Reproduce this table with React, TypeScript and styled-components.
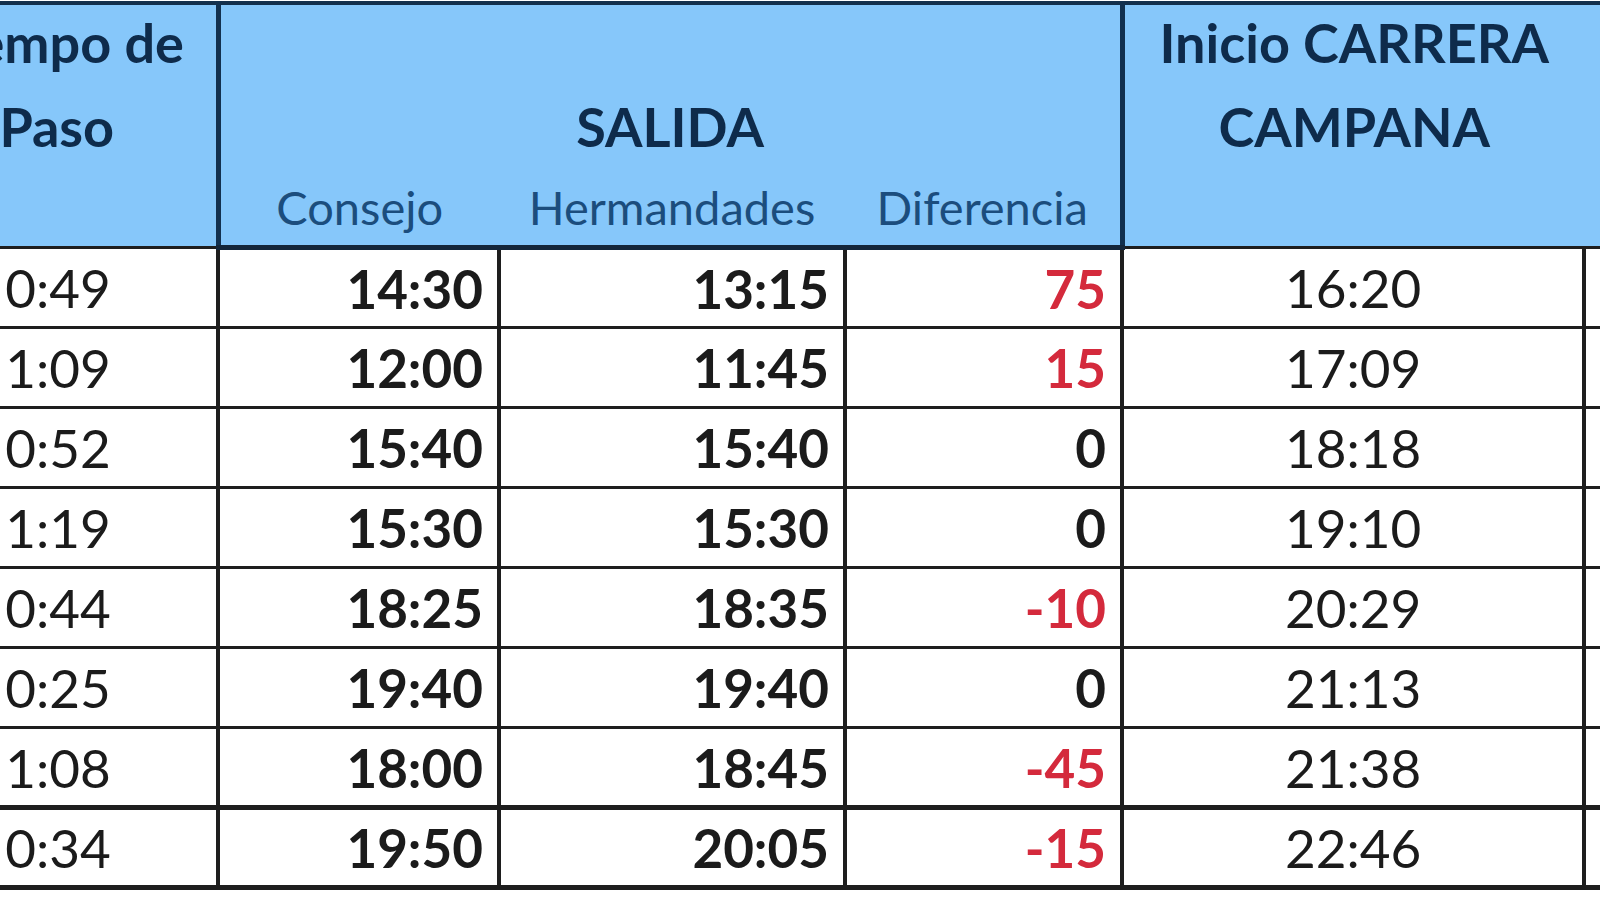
import React from "react";
import styled, { createGlobalStyle } from "styled-components";

interface Row {
  paso: string;
  consejo: string;
  hermandades: string;
  diferencia: number;
  carrera: string;
}

const rows: Row[] = [
  { paso: "0:49", consejo: "14:30", hermandades: "13:15", diferencia: 75, carrera: "16:20" },
  { paso: "1:09", consejo: "12:00", hermandades: "11:45", diferencia: 15, carrera: "17:09" },
  { paso: "0:52", consejo: "15:40", hermandades: "15:40", diferencia: 0, carrera: "18:18" },
  { paso: "1:19", consejo: "15:30", hermandades: "15:30", diferencia: 0, carrera: "19:10" },
  { paso: "0:44", consejo: "18:25", hermandades: "18:35", diferencia: -10, carrera: "20:29" },
  { paso: "0:25", consejo: "19:40", hermandades: "19:40", diferencia: 0, carrera: "21:13" },
  { paso: "1:08", consejo: "18:00", hermandades: "18:45", diferencia: -45, carrera: "21:38" },
  { paso: "0:34", consejo: "19:50", hermandades: "20:05", diferencia: -15, carrera: "22:46" },
];

const GlobalStyle = createGlobalStyle`
  html, body {
    margin: 0;
    padding: 0;
    background: #ffffff;
  }
`;

// the screenshot is a crop of a bigger sheet, so the table is cut on both sides
const Sheet = styled.div`
  width: 1600px;
  height: 900px;
  overflow: hidden;
  background: #ffffff;
  padding-top: 1px;
  box-sizing: border-box;
`;

const Table = styled.table`
  margin-left: -104px;
  border-collapse: collapse;
  table-layout: fixed;
  width: 1970px;
  font-family: Lato, "Open Sans", sans-serif;
`;

const HeadCell = styled.th<{ $align?: "top" | "bottom" }>`
  background: #86c7fa;
  color: #0e2b4b;
  font-size: 54px;
  font-weight: 700;
  line-height: 84px;
  height: 164px;
  padding: 0;
  text-align: center;
  vertical-align: ${({ $align }) => $align ?? "top"};
  white-space: nowrap;
  border-top: 4px solid #14304c;
`;

const TopLines = styled.div`
  margin-top: -4px;
`;

const GroupCell = styled(HeadCell)`
  border-left: 5px solid #12304e;
  border-right: 5px solid #12304e;
`;

const SubHeadCell = styled.th<{ $edge?: "left" | "right" }>`
  background: #86c7fa;
  color: #1b4d7d;
  font-size: 47px;
  font-weight: 400;
  height: 76px;
  padding: 0;
  text-align: center;
  vertical-align: middle;
  white-space: nowrap;
  border-bottom: 5px solid #14263a;
  ${({ $edge }) => ($edge ? `border-${$edge}: 5px solid #12304e;` : "")}
`;

const BodyRow = styled.tr<{ $last?: boolean }>`
  height: 80px;
  border-top: ${({ $last }) => ($last ? "5px" : "3px")} solid #1e1e1e;
  border-bottom: ${({ $last }) => ($last ? "5px" : "3px")} solid #1e1e1e;
`;

const Cell = styled.td<{ $align?: "left" | "center" | "right"; $bold?: boolean; $red?: boolean }>`
  padding: 0 ${({ $align }) => ($align === "right" ? "14px" : "0")} 0 0;
  text-align: ${({ $align }) => $align ?? "center"};
  font-size: 53px;
  font-weight: ${({ $bold }) => ($bold ? 700 : 400)};
  color: ${({ $red }) => ($red ? "#d42a3c" : "#1b1b1b")};
  vertical-align: middle;
  white-space: nowrap;
  border-left: 4px solid #1e1e1e;
  border-right: 4px solid #1e1e1e;
`;

export default function App() {
  return (
    <>
      <GlobalStyle />
      <Sheet>
        <Table>
          <colgroup>
            <col style={{ width: 320 }} />
            <col style={{ width: 281 }} />
            <col style={{ width: 346 }} />
            <col style={{ width: 277 }} />
            <col style={{ width: 462 }} />
            <col style={{ width: 284 }} />
          </colgroup>
          <thead>
            <tr>
              <HeadCell rowSpan={2}>
                <TopLines>
                  Tiempo de
                  <br />
                  Paso
                </TopLines>
              </HeadCell>
              <GroupCell colSpan={3} $align="bottom">
                SALIDA
              </GroupCell>
              <HeadCell rowSpan={2}>
                <TopLines>
                  Inicio CARRERA
                  <br />
                  CAMPANA
                </TopLines>
              </HeadCell>
              <HeadCell rowSpan={2} />
            </tr>
            <tr>
              <SubHeadCell $edge="left">Consejo</SubHeadCell>
              <SubHeadCell>Hermandades</SubHeadCell>
              <SubHeadCell $edge="right">Diferencia</SubHeadCell>
            </tr>
          </thead>
          <tbody>
            {rows.map((r, i) => (
              <BodyRow key={i} $last={i === rows.length - 1}>
                <Cell>{r.paso}</Cell>
                <Cell $align="right" $bold>
                  {r.consejo}
                </Cell>
                <Cell $align="right" $bold>
                  {r.hermandades}
                </Cell>
                <Cell $align="right" $bold $red={r.diferencia !== 0}>
                  {r.diferencia}
                </Cell>
                <Cell>{r.carrera}</Cell>
                <Cell />
              </BodyRow>
            ))}
          </tbody>
        </Table>
      </Sheet>
    </>
  );
}
